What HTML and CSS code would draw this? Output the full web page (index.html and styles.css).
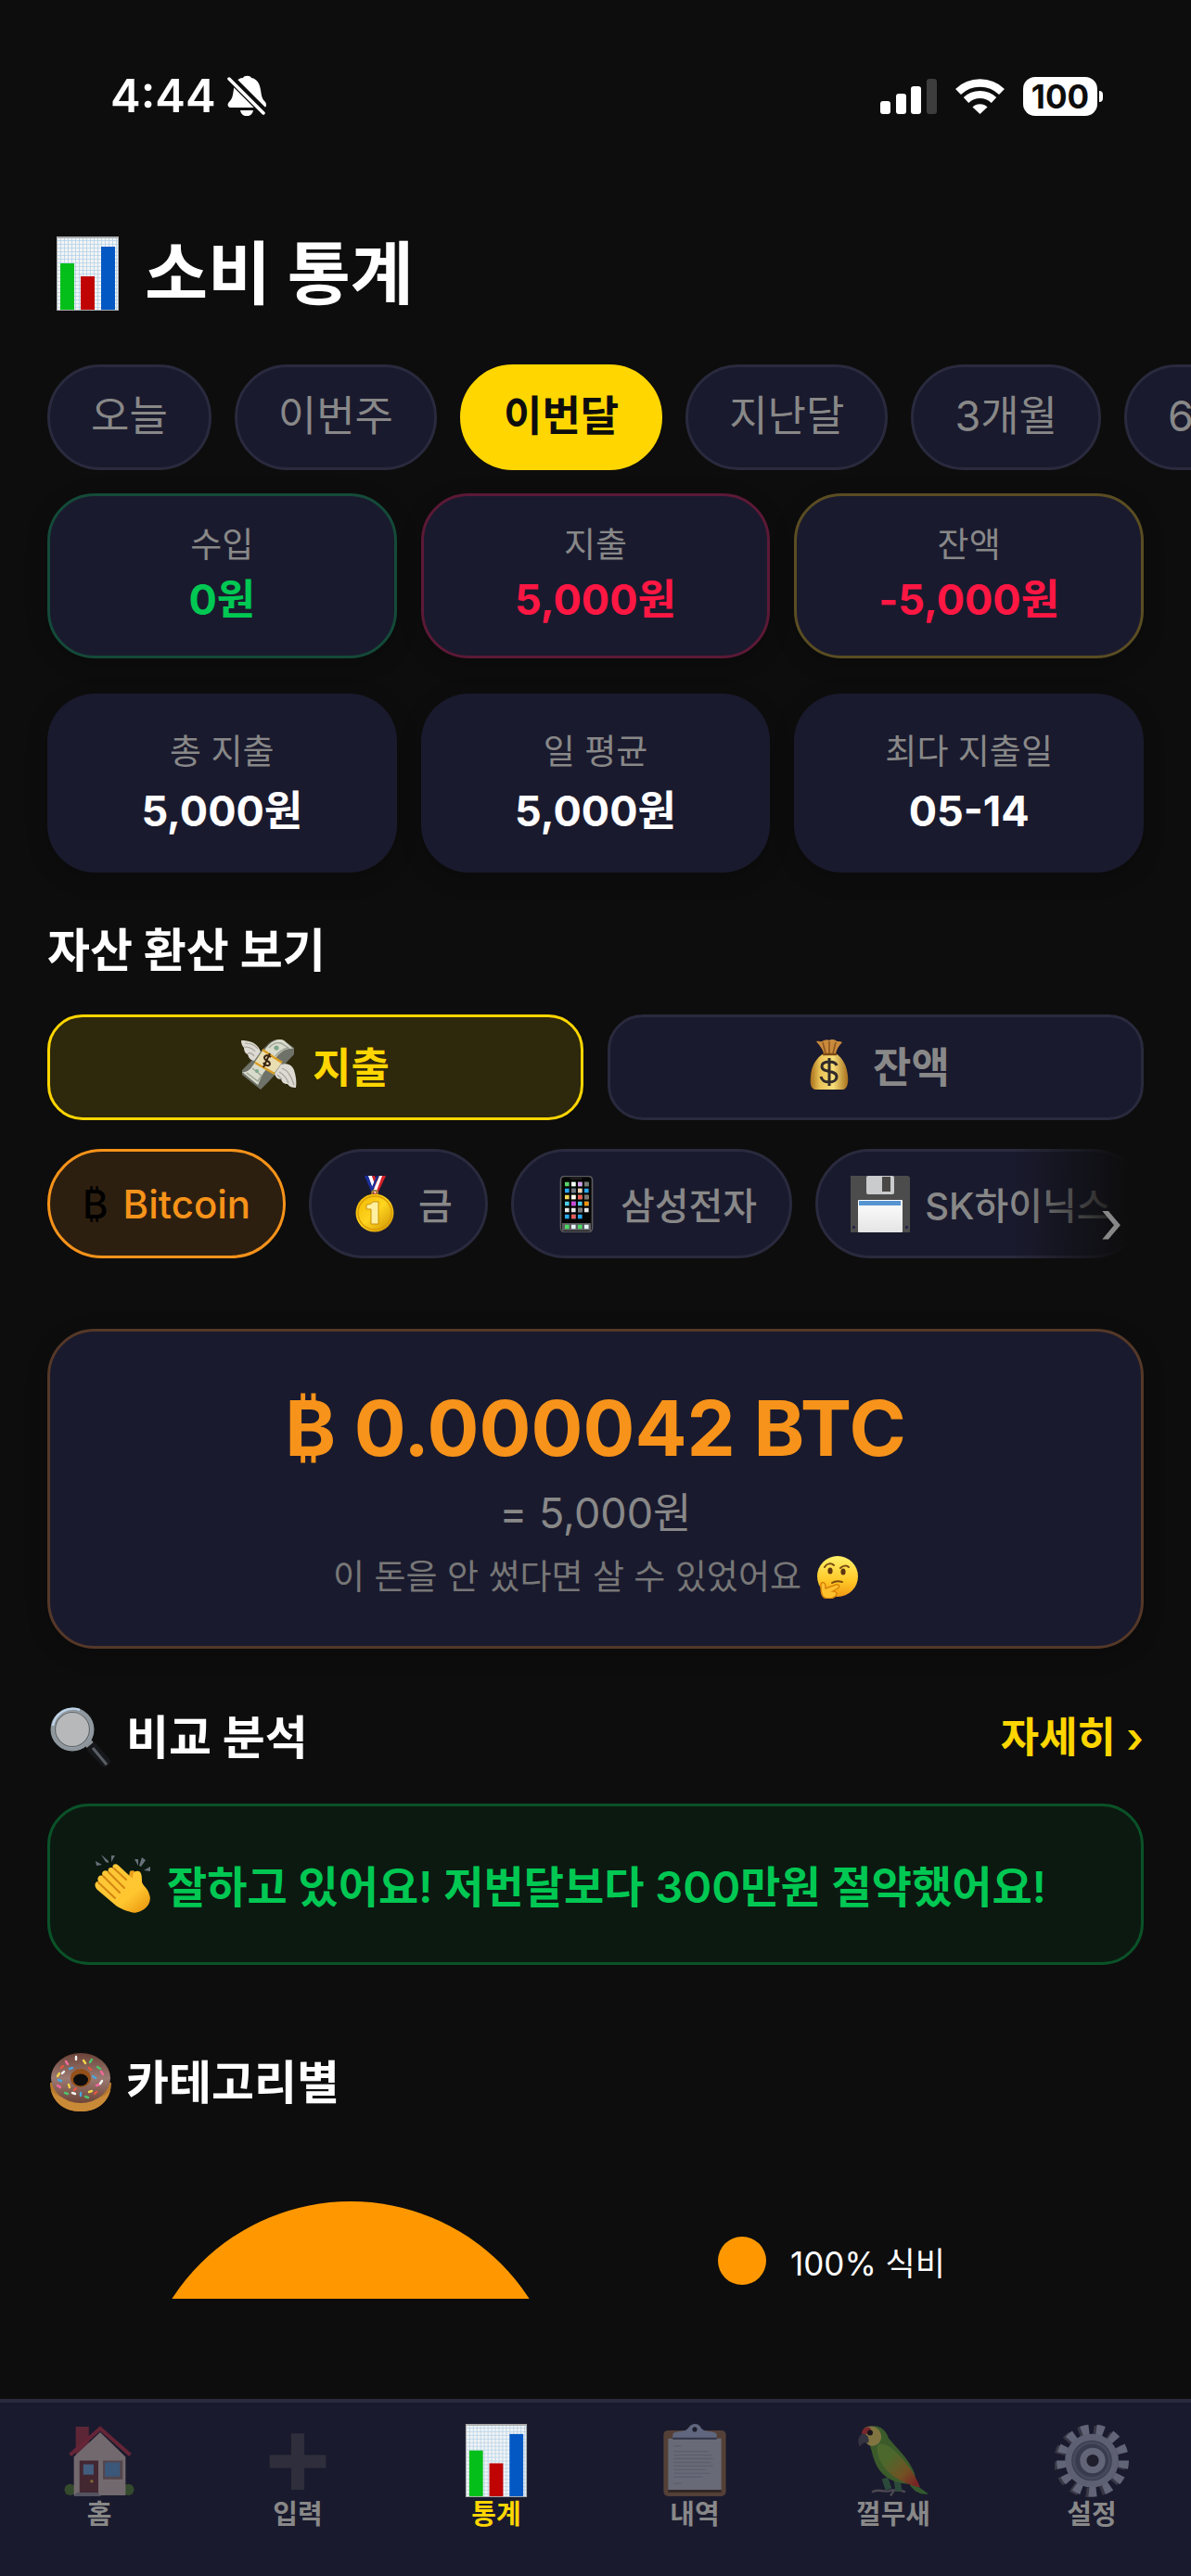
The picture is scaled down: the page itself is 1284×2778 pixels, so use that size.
FILE: index.html
```html
<!DOCTYPE html>
<html lang="ko">
<head>
    <meta charset="UTF-8">
    <meta name="viewport" content="width=device-width, initial-scale=1.0">
    <title>소비 통계</title>
    <link rel="stylesheet" href="styles.css">
</head>
<body>
    <!-- 아이콘 모음 -->
    <svg class="sprite" aria-hidden="true">
        <defs>
            <linearGradient id="gold" x1="0" y1="0" x2="1" y2="1">
                <stop offset="0" stop-color="#f0b400"/>
                <stop offset="0.5" stop-color="#ffd51f"/>
                <stop offset="1" stop-color="#c98a00"/>
            </linearGradient>
            <linearGradient id="bag" x1="0" y1="0" x2="1" y2="0">
                <stop offset="0" stop-color="#a86f1c"/>
                <stop offset="0.25" stop-color="#e9c255"/>
                <stop offset="0.6" stop-color="#f7df7a"/>
                <stop offset="1" stop-color="#a9701c"/>
            </linearGradient>
            <linearGradient id="face" x1="0" y1="0" x2="0" y2="1">
                <stop offset="0" stop-color="#fff06a"/>
                <stop offset="0.6" stop-color="#ffc928"/>
                <stop offset="1" stop-color="#f29a12"/>
            </linearGradient>
            <linearGradient id="hand" x1="0" y1="0" x2="1" y2="1">
                <stop offset="0" stop-color="#ffc83a"/>
                <stop offset="0.65" stop-color="#ffc62f"/>
                <stop offset="1" stop-color="#e8920c"/>
            </linearGradient>
            <linearGradient id="choco" x1="0" y1="0" x2="0" y2="1">
                <stop offset="0" stop-color="#6b4237"/>
                <stop offset="0.5" stop-color="#9b7a72"/>
                <stop offset="1" stop-color="#6e4438"/>
            </linearGradient>
            <linearGradient id="feather" x1="0" y1="0" x2="1" y2="1">
                <stop offset="0.3" stop-color="#7fb52c"/>
                <stop offset="0.65" stop-color="#c98a1c"/>
                <stop offset="0.9" stop-color="#d8301c"/>
            </linearGradient>
            <linearGradient id="label" x1="0" y1="0" x2="0" y2="1">
                <stop offset="0" stop-color="#ffffff"/>
                <stop offset="1" stop-color="#e4e4e4"/>
            </linearGradient>
            <pattern id="grid" width="4" height="4" patternUnits="userSpaceOnUse">
                <rect width="4" height="4" fill="#f2f4f5"/>
                <path d="M0 0h4M0 0v4" stroke="#b4d2e8" stroke-width="1.6"/>
            </pattern>
        </defs>

        <symbol id="i-chart" viewBox="0 0 67 80">
            <rect width="67" height="80" fill="#a9abad"/>
            <rect x="1" y="2" width="65" height="77" fill="url(#grid)"/>
            <rect x="4" y="29" width="15" height="50" fill="#04bf1a"/>
            <rect x="26" y="43" width="15" height="36" fill="#c00404"/>
            <rect x="48" y="11" width="15" height="68" fill="#0358c4"/>
        </symbol>

        <symbol id="i-money" viewBox="0 0 60 54">
            <path d="M28 6C33 0 41-1 46 1L57 9v7L29 46 21 54 1 38v-5Z" fill="#6f7268"/>
            <path d="M27 9C33 1 41-2 46 1L56 10C49 9 43 13 38 19L24 36c-3 5-4 9-6 13L1 35C7 36 11 31 14 26Z" fill="#d9dbcc"/>
            <path d="M30 9c4-5 9-6 13-5l8 5c-6 1-10 4-14 9M12 31l10 8-4 6-12-9" fill="none" stroke="#9ca294" stroke-width="1.4"/>
            <circle cx="38" cy="9" r="2.6" fill="#7ea889"/>
            <circle cx="17" cy="34" r="2" fill="#7ea889"/>
            <path d="M23 12 44 25 36 36 15 24Z" fill="#e9ddb2"/>
            <path d="M23 11 44 25M15 25l21 12" stroke="#dc9e20" stroke-width="2.4"/>
            <path d="M32 19c-3-3-7-2-7 1s6 3 6 6-5 3-7-1M31 15 24 30" fill="none" stroke="#3a2410" stroke-width="2"/>
            <path d="M0 1c8 0 15 2 19 8l2 4-7 10C9 22 8 19 7 16 4 15 3 12 3 9 1 7 0 4 0 1Z" fill="#dcdad2"/>
            <path d="M3 8c5 0 9 1 12 5M7 15c3-1 5 0 7 3M4 4c5 0 10 1 14 6" fill="none" stroke="#a4a198" stroke-width="1.2"/>
            <path d="M43 27c7-2 12 1 14 6 2 6 3 13 2 19-4 0-7-1-9-4-4 0-6-2-7-5-4 0-6-3-7-6Z" fill="#dcdad2"/>
            <path d="M44 31c6 2 10 8 13 18M41 35c5 3 8 6 10 12M39 38l5 5" fill="none" stroke="#a4a198" stroke-width="1.2"/>
        </symbol>

        <symbol id="i-bag" viewBox="0 0 60 54">
            <path d="M16 2c3-1 4 1 6 0s5-3 8-1c3-2 5-1 7 0 2 2 4 0 7 2-3 3-6 7-7 12H24c-1-5-5-9-8-13Z" fill="#c98a3c"/>
            <path d="M23 3l3 12M30 2v13M37 3l-3 12" stroke="#8d5720" stroke-width="1.6"/>
            <path d="M24 15h13c8 5 12 14 13 24 1 9-1 14-5 15H15c-5-1-6-6-5-15 1-11 6-19 14-24Z" fill="url(#bag)"/>
            <path d="M23 16h15" stroke="#7c4a14" stroke-width="2.4"/>
            <path d="M38 28c-1-3-4-4-8-4-5 0-8 2-8 5 0 8 16 3 16 11 0 4-4 6-8 6-5 0-8-2-9-6M30 20v30" fill="none" stroke="#2f2a2a" stroke-width="3"/>
        </symbol>

        <symbol id="i-medal" viewBox="0 0 64 61">
            <path d="M22 0h7l7 17-5 4Z" fill="#1c2f9c"/>
            <path d="M26 0h4l6 15-3 4Z" fill="#fff"/>
            <path d="M30 0h3l4 12-2 3Z" fill="#d8232a"/>
            <path d="M45 0h-7l-8 18 5 3Z" fill="#d8232a"/>
            <path d="M41 0h-3l-7 17 3 2Z" fill="#fff"/>
            <path d="M37 0h-2l-5 12 1 5Z" fill="#1c2f9c"/>
            <circle cx="33" cy="19" r="3" fill="none" stroke="#9c7a30" stroke-width="2"/>
            <circle cx="33" cy="40" r="20.5" fill="url(#gold)"/>
            <circle cx="33" cy="40" r="18" fill="none" stroke="#d99c05" stroke-width="1.4"/>
            <path d="M31 28h6v24h-8V36h-5v-5c4 0 6-1 7-3Z" fill="#fff0a0" stroke="#c99108" stroke-width="1"/>
        </symbol>

        <symbol id="i-phone" viewBox="0 0 64 61">
            <rect x="15.500" y="0.500" width="34" height="60" rx="4" fill="#050505" stroke="#5c5c60" stroke-width="1.6"/>
            <path d="M26 2h12v2H26Z" fill="#1c1c1e"/>
            <g stroke-width="4.600" fill="none" stroke-dasharray="4.6 2.4">
                <path d="M20 9h26" stroke="#58d36a"/>
                <path d="M20 16h26" stroke="#2aa8ef"/>
                <path d="M20 23h26" stroke="#f4d95b"/>
                <path d="M20 30h26" stroke="#4ccbe8"/>
                <path d="M20 37h26" stroke="#e8e8e8"/>
                <path d="M20 44h19" stroke="#2aa8ef"/>
            </g>
            <g stroke-width="4.600" fill="none">
                <path d="M27 9h4.600M27 23h4.600" stroke="#fff"/>
                <path d="M34 9h4.600" stroke="#d79cf0"/>
                <path d="M41 9h4.600M27 16h4.600M41 23h4.600M34 37h4.600" stroke="#77777c"/>
                <path d="M34 16h4.600" stroke="#f3cfa8"/>
                <path d="M34 23h4.600M27 44h4.600" stroke="#ef5a54"/>
                <path d="M27 30h4.600" stroke="#cf45d8"/>
                <path d="M41 30h4.600" stroke="#ff9409"/>
            </g>
            <rect x="17" y="51" width="31" height="8" fill="#5b5b60"/>
            <path d="M20 55h26" stroke="#4cd964" stroke-width="4.600" stroke-dasharray="4.6 9.4"/>
            <path d="M27 55h19" stroke="#e6f4fb" stroke-width="4.600" stroke-dasharray="4.6 9.4"/>
        </symbol>

        <symbol id="i-floppy" viewBox="0 0 64 61">
            <path d="M0 0h62l2 2v59H0Z" fill="#4c4c4c"/>
            <rect x="17" y="0" width="30" height="20" rx="2" fill="#c9cbcc"/>
            <rect x="34" y="1" width="9" height="16" fill="#4a4846"/>
            <rect x="8" y="26" width="48" height="35" rx="1" fill="url(#label)"/>
            <rect x="9" y="27" width="45" height="5" fill="#5694d2"/>
            <path d="M2 54h3v3H2ZM59 54h3v3h-3Z" fill="#26264a"/>
        </symbol>

        <symbol id="i-think" viewBox="0 0 45 46">
            <circle cx="23" cy="22" r="22" fill="url(#face)"/>
            <path d="M9 12c2-4 7-5 10-2M26 13c3-3 7-3 9-1" fill="none" stroke="#7a4a12" stroke-width="2" stroke-linecap="round"/>
            <ellipse cx="15" cy="16" rx="2.6" ry="3.500" fill="#5d3510"/>
            <ellipse cx="29" cy="17" rx="2.6" ry="3.500" fill="#5d3510"/>
            <path d="M17 29c3-2 7-2 11-1" fill="none" stroke="#7a4a12" stroke-width="2" stroke-linecap="round"/>
            <path d="M5 30c2-3 5-1 5 3v2l11-4c4-1 5 2 2 4l-5 3c4 0 5 3 3 5-3 3-8 4-12 2-4-2-4-8-4-15Z" fill="#ffc02e" stroke="#d78207" stroke-width="1.4"/>
        </symbol>

        <symbol id="i-search" viewBox="0 0 66 66">
            <path d="M42 42l6-4 16 18c3 4-3 11-7 8L40 47Z" fill="#17181b"/>
            <path d="M46 44l15 18" stroke="#5a5f66" stroke-width="3"/>
            <path d="M38 42l7-6" stroke="#8a8f94" stroke-width="5"/>
            <circle cx="24" cy="24" r="21.500" fill="#b6b8b9" stroke="#8e979e" stroke-width="4"/>
            <circle cx="24" cy="24" r="18.500" fill="none" stroke="#5c6368" stroke-width="1.2"/>
            <path d="M3 20A22 22 0 0 1 32 3" fill="none" stroke="#bcd4ea" stroke-width="2.4"/>
        </symbol>

        <symbol id="i-clap" viewBox="0 0 60 64">
            <path d="M7 1l8 7v2l-3-1ZM18 2l4 0-4 7ZM1 8l7 4-6 1ZM43 6l4 7 0-7ZM51 4l4 3-5 7-2-1ZM53 18l7-4v5Z" fill="#68707a"/>
            <path d="M38 19c4-2 7 1 9 6l9 14c5 7 4 13 0 18-5 6-13 8-17 6l-8-5Z" fill="#e9a01b"/>
            <path d="M21 17c-3-4-8-1-6 3-4-4-9 0-6 4-4-2-7 2-5 6-4 0-5 5-1 9l20 17c12 8 22 9 30 4 6-4 8-10 6-16-2-8-8-9-8-14 0-8-1-12-6-11-3 0-4 4-4 8L26 13c-4-4-9 0-5 4Z" fill="url(#hand)"/>
            <path d="M15 20l17 17M9 24l18 18M4 31l18 17M21 16l13 12" fill="none" stroke="#d48612" stroke-width="2" stroke-linecap="round"/>
        </symbol>

        <symbol id="i-donut" viewBox="0 0 66 64">
            <path d="M0 32c0 18 13 31 33 31s33-13 33-31Z" fill="#b8792c"/>
            <path d="M33 63c-15 0-28-7-32-23 9 14 55 15 64 0-4 16-17 23-32 23Z" fill="#c98a38"/>
            <ellipse cx="33" cy="27" rx="32" ry="27" fill="url(#choco)"/>
            <ellipse cx="33" cy="27" rx="11" ry="10" fill="#935019"/>
            <ellipse cx="33" cy="29" rx="8" ry="6.500" fill="#0d0d0d"/>
            <g fill="none" stroke-width="2.400" stroke-linecap="round">
                <path d="M17 9l2 3M55 20l2 3M8 35l3 2M50 35l3-1" stroke="#f06a9b"/>
                <path d="M28 4v3M56 30l-2 3M24 43l3 1M13 22l2-2" stroke="#f2f2f2"/>
                <path d="M36 8l2 3M20 34l1 3M42 42l3-1M8 25l2-3" stroke="#f0d34a"/>
                <path d="M45 7l-2 3M51 15l3 2M16 43l3 1M38 47l3 1" stroke="#4fc26b"/>
                <path d="M24 16l-3 1M46 25l3 2M33 43v3M12 30l-3-1" stroke="#4aa5dc"/>
                <path d="M14 14l-2 2M48 44l2-2M28 38l-2 2M42 16l2 2" stroke="#e8553e"/>
            </g>
        </symbol>

        <symbol id="i-house" viewBox="0 0 78 78">
            <path d="M14 3h14v18L14 34Z" fill="#a0323e"/>
            <circle cx="8" cy="70" r="6" fill="#4d7a2c"/>
            <circle cx="70" cy="70" r="6" fill="#4d7a2c"/>
            <path d="M12 35 40 9l27 26v41H12Z" fill="#c9b8ae"/>
            <path d="M8 33 40 5l32 28" fill="none" stroke="#b03040" stroke-width="4"/>
            <rect x="18" y="39" width="20" height="36" fill="#6b3434"/>
            <rect x="22" y="43" width="11" height="11" fill="#6aa0cc"/>
            <circle cx="31" cy="61" r="1.600" fill="#f0c040"/>
            <rect x="43" y="39" width="21" height="20" fill="#8c706c"/>
            <rect x="45" y="41" width="16" height="15" fill="#5d94c4"/>
            <path d="M15 73h22l4 4H12Z" fill="#8d8d94"/>
        </symbol>

        <symbol id="i-plus" viewBox="0 0 78 78">
            <path d="M32 10h14v23h23v14H46v23H32V47H9V33h23Z" fill="#42424a"/>
        </symbol>

        <symbol id="i-clip" viewBox="0 0 78 80">
            <rect x="5" y="7" width="68" height="72" rx="5" fill="#8f6740"/>
            <rect x="10" y="16" width="58" height="56" fill="#b6b9c2"/>
            <path d="M10 72h58v3H10Z" fill="#4b3220"/>
            <path d="M16 24h8M16 30h38M16 34h42M16 38h43M16 42h40M16 46h43M16 50h36M16 54h40M16 58h32M16 65h9" stroke="#9fa2ab" stroke-width="1.400"/>
            <path d="M15 16v-4c0-3 3-3 8-4 6 0 8-2 10-5 3-4 10-4 12 0 2 3 4 5 10 5 5 1 8 1 8 4v4Z" fill="#a4b2cb"/>
            <circle cx="39" cy="6" r="2.600" fill="#20202c"/>
            <path d="M15 16h48" stroke="#4a5060" stroke-width="2"/>
        </symbol>

        <symbol id="i-parrot" viewBox="0 0 80 78">
            <path d="M17 73c8-5 14 2 21-2 6 0 10-1 15 2M37 77l4-6" fill="none" stroke="#7a7474" stroke-width="2.400"/>
            <path d="M31 58l4 12M44 60l2 12" stroke="#3f7a48" stroke-width="7"/>
            <path d="M54 58l24 17c-8 1-14-2-19-8Z" fill="#4d9a30"/>
            <path d="M14 3c9-4 18 2 21 12 8 10 22 22 28 38 2 8-2 12-9 11-12-1-24-6-31-18-5-9-6-18-9-26Z" fill="#5d9c2a"/>
            <path d="M23 30c-2-12 7-10 14-5 12 9 26 27 32 43-18-4-42-15-46-38Z" fill="url(#feather)"/>
            <path d="M9 4c8-5 17 0 18 8 1 7-5 12-12 11C8 20 5 10 9 4Z" fill="#e5cf55"/>
            <path d="M8 5c5-4 9-1 8 3l-8 4c-3-1-2-5 0-7Z" fill="#d8342b"/>
            <path d="M7 10c5 0 8 5 6 10-4-1-7 0-9 4C1 20 2 12 7 10Z" fill="#4c4c54"/>
            <circle cx="15" cy="9" r="3" fill="#1c120c"/>
        </symbol>

        <symbol id="i-gear" viewBox="0 0 78 78">
            <circle cx="37" cy="40" r="33" pathLength="26" fill="none" stroke="#57565f" stroke-width="11" stroke-dasharray="1 1"/>
            <circle cx="40" cy="39" r="33" pathLength="26" fill="none" stroke="#a9afc0" stroke-width="11" stroke-dasharray="1 1"/>
            <circle cx="39" cy="39" r="25" fill="#565c6c" stroke="#a0a6b6" stroke-width="7"/>
            <circle cx="39" cy="39" r="19" fill="none" stroke="#737989" stroke-width="3"/>
            <circle cx="40" cy="39" r="10" fill="#24222c" stroke="#a9afc0" stroke-width="7"/>
        </symbol>
    </svg>

    <div class="status-bar">
        <div class="status-left">
            <span>4:44</span>
            <svg class="icon-bell" viewBox="0 0 42 46">
                <path d="M3 35c-3-1-3-4-1-6 4-4 4-8 5-14C8 7 12 3 17 3c1-3 8-3 9 0 6 1 9 6 10 13 1 6 1 9 5 13 2 3 1 6-1 6Z" fill="#fff"/>
                <path d="M14 38h14c-1 4-3 6-7 6s-6-2-7-6Z" fill="#fff"/>
                <path d="M0 0 42 42" stroke="#0d0d0d" stroke-width="9"/>
                <path d="M2 4l37 37" stroke="#fff" stroke-width="3.500" stroke-linecap="round"/>
            </svg>
        </div>
        <div class="status-right">
            <svg class="icon-signal" viewBox="0 0 61 38">
                <rect x="0" y="24" width="11" height="14" rx="3" fill="#fff"/>
                <rect x="17" y="16" width="11" height="22" rx="3" fill="#fff"/>
                <rect x="33" y="8" width="11" height="30" rx="3" fill="#fff"/>
                <rect x="50" y="0" width="11" height="38" rx="3" fill="#3d3d3d"/>
            </svg>
            <svg class="icon-wifi" viewBox="0 0 53 38">
                <path d="M3 14a34 34 0 0 1 47 0" fill="none" stroke="#fff" stroke-width="8.500"/>
                <path d="M11.500 23a22 22 0 0 1 30 0" fill="none" stroke="#fff" stroke-width="8"/>
                <path d="M18.500 30.500a11.500 11.500 0 0 1 16 0L26.500 38Z" fill="#fff"/>
            </svg>
            <div class="battery"><span>100</span></div>
        </div>
    </div>

    <main class="content">
        <h1 class="page-title"><svg class="icon-title"><use href="#i-chart"/></svg>소비 통계</h1>

        <div class="tabs">
            <button class="tab">오늘</button>
            <button class="tab">이번주</button>
            <button class="tab active">이번달</button>
            <button class="tab">지난달</button>
            <button class="tab">3개월</button>
            <button class="tab">6개월</button>
        </div>

        <div class="cards balance">
            <div class="card income">
                <div class="card-label">수입</div>
                <div class="card-value">0원</div>
            </div>
            <div class="card expense">
                <div class="card-label">지출</div>
                <div class="card-value">5,000원</div>
            </div>
            <div class="card remain">
                <div class="card-label">잔액</div>
                <div class="card-value">-5,000원</div>
            </div>
        </div>

        <div class="cards summary">
            <div class="card">
                <div class="card-label">총 지출</div>
                <div class="card-value">5,000원</div>
            </div>
            <div class="card">
                <div class="card-label">일 평균</div>
                <div class="card-value">5,000원</div>
            </div>
            <div class="card">
                <div class="card-label">최다 지출일</div>
                <div class="card-value">05-14</div>
            </div>
        </div>

        <h2 class="section-title">자산 환산 보기</h2>
        <div class="modes">
            <button class="mode active"><svg class="icon-mode"><use href="#i-money"/></svg>지출</button>
            <button class="mode"><svg class="icon-mode"><use href="#i-bag"/></svg>잔액</button>
        </div>

        <div class="assets">
            <div class="asset-list">
                <button class="asset active"><span class="coin">₿</span>Bitcoin</button>
                <button class="asset"><svg class="icon-asset"><use href="#i-medal"/></svg>금</button>
                <button class="asset"><svg class="icon-asset"><use href="#i-phone"/></svg>삼성전자</button>
                <button class="asset"><svg class="icon-asset"><use href="#i-floppy"/></svg>SK하이닉스</button>
            </div>
            <button class="asset-more">›</button>
        </div>

        <div class="result">
            <div class="result-amount">₿ 0.000042 BTC</div>
            <div class="result-won">= 5,000원</div>
            <div class="result-note">이 돈을 안 썼다면 살 수 있었어요 <svg class="icon-note"><use href="#i-think"/></svg></div>
        </div>

        <div class="section-head">
            <h2 class="section-title"><svg class="icon-section"><use href="#i-search"/></svg>비교 분석</h2>
            <a class="detail-link" href="#">자세히 ›</a>
        </div>
        <div class="praise"><svg class="icon-praise"><use href="#i-clap"/></svg>잘하고 있어요! 저번달보다 300만원 절약했어요!</div>

        <h2 class="section-title category-title"><svg class="icon-section"><use href="#i-donut"/></svg>카테고리별</h2>
        <div class="chart">
            <div class="pie-area"><div class="pie"></div></div>
            <div class="legend"><span class="dot"></span>100% 식비</div>
        </div>
    </main>

    <nav class="bottom-nav">
        <a class="nav-item" href="#"><svg class="nav-icon"><use href="#i-house"/></svg>홈</a>
        <a class="nav-item" href="#"><svg class="nav-icon"><use href="#i-plus"/></svg>입력</a>
        <a class="nav-item active" href="#"><svg class="nav-icon"><use href="#i-chart"/></svg>통계</a>
        <a class="nav-item" href="#"><svg class="nav-icon"><use href="#i-clip"/></svg>내역</a>
        <a class="nav-item" href="#"><svg class="nav-icon"><use href="#i-parrot"/></svg>껄무새</a>
        <a class="nav-item" href="#"><svg class="nav-icon"><use href="#i-gear"/></svg>설정</a>
    </nav>
</body>
</html>
```

FILE: styles.css
```css
* {
    box-sizing: border-box;
}

body, h1, h2 {
    margin: 0;
    padding: 0;
}

body {
    display: flex;
    flex-direction: column;
    min-height: 100vh;
    overflow-x: hidden;
    background-color: #0d0d0d;
    color: #fff;
    font-family: Inter, "Noto Sans CJK KR", sans-serif;
}

button {
    margin: 0;
    font-family: inherit;
    cursor: pointer;
}

a {
    text-decoration: none;
}

svg {
    flex: none;
}

.sprite {
    position: absolute;
    width: 0;
    height: 0;
}

/* Status bar */
.status-bar {
    display: flex;
    justify-content: space-between;
    align-items: center;
    padding: 74px 101px 0 119px;
}

.status-left,
.status-right {
    display: flex;
    align-items: center;
}

.status-left {
    gap: 12px;
    font-size: 49px;
    font-weight: 600;
    line-height: 60px;
}

.status-right {
    gap: 20px;
}

.icon-bell {
    width: 42px;
    height: 46px;
}

.icon-signal {
    width: 61px;
    height: 38px;
}

.icon-wifi {
    width: 53px;
    height: 38px;
}

.battery {
    position: relative;
    width: 80px;
    height: 42px;
    border-radius: 13px;
    background-color: #fff;
    color: #0d0d0d;
    font-size: 35px;
    font-weight: 700;
    line-height: 42px;
    text-align: center;
}

.battery::after {
    content: "";
    position: absolute;
    top: 15px;
    right: -6px;
    width: 4px;
    height: 12px;
    border-radius: 0 4px 4px 0;
    background-color: #fff;
}

/* Content */
.content {
    flex: 1;
    padding: 121px 51px 107px;
}

.page-title {
    display: flex;
    align-items: center;
    gap: 28px;
    padding-left: 10px;
    font-size: 74px;
    font-weight: 700;
    line-height: 80px;
}

.icon-title {
    width: 67px;
    height: 80px;
}

/* Period tabs */
.tabs {
    display: flex;
    gap: 25px;
    margin: 58px -51px 0 0;
    overflow: hidden;
}

.tab {
    flex: none;
    height: 114px;
    padding: 0 44px 10px;
    border: 3px solid #2a2a3e;
    border-radius: 57px;
    background-color: #1a1a2e;
    color: #888;
    font-size: 45px;
}

.tab.active {
    border-color: #ffd600;
    background-color: #ffd600;
    color: #0d0d0d;
    font-weight: 700;
}

/* Number cards */
.cards {
    display: grid;
    grid-template-columns: repeat(3, 1fr);
    gap: 26px;
    text-align: center;
}

.card {
    border-radius: 51px;
    background-color: #1a1a2e;
    box-shadow: 0 6px 24px rgba(0, 0, 0, 0.2);
}

.card-label {
    color: #888;
    font-size: 37px;
    line-height: 50px;
}

.card-value {
    font-size: 45px;
    font-weight: 700;
    line-height: 60px;
}

.balance {
    margin-top: 25px;
}

.balance .card {
    padding: 28px 0 30px;
    border: 3px solid;
}

.balance .card-value {
    margin-top: 4px;
}

.balance .income {
    border-color: #144a39;
}

.income .card-value {
    color: #00c853;
}

.balance .expense {
    border-color: #5c1936;
}

.balance .remain {
    border-color: #5a4d22;
}

.expense .card-value,
.remain .card-value {
    color: #ff1744;
}

.summary {
    margin-top: 38px;
}

.summary .card {
    padding: 38px 0 36px;
}

.summary .card-value {
    margin-top: 9px;
}

/* Section titles */
.section-title {
    display: flex;
    align-items: center;
    gap: 16px;
    margin-top: 49px;
    font-size: 50px;
    font-weight: 700;
    line-height: 70px;
}

.icon-section {
    width: 66px;
    height: 66px;
    margin-left: 3px;
}

.section-head {
    display: flex;
    justify-content: space-between;
    align-items: center;
    margin-top: 61px;
}

.section-head .section-title {
    margin-top: 0;
}

.detail-link {
    color: #ffd600;
    font-size: 45px;
    font-weight: 600;
    line-height: 60px;
}

.category-title {
    margin-top: 92px;
}

/* Expense / balance switch */
.modes {
    display: grid;
    grid-template-columns: repeat(2, 1fr);
    gap: 26px;
    margin-top: 34px;
}

.mode {
    display: flex;
    justify-content: center;
    align-items: center;
    gap: 17px;
    height: 114px;
    padding-bottom: 7px;
    border: 3px solid #2a2a3e;
    border-radius: 38px;
    background-color: #1a1a2e;
    color: #888;
    font-size: 45px;
    font-weight: 600;
}

.mode.active {
    border-color: #ffd600;
    background-color: #2e280c;
    color: #ffd600;
}

.icon-mode {
    width: 60px;
    height: 54px;
}

/* Asset chips */
.assets {
    position: relative;
    margin-top: 31px;
}

.asset-list {
    display: flex;
    gap: 25px;
    padding-bottom: 38px;
    overflow: hidden;
}

.asset {
    display: flex;
    flex: none;
    align-items: center;
    gap: 16px;
    height: 118px;
    padding: 0 35px;
    border: 3px solid #2a2a3e;
    border-radius: 59px;
    background-color: #1a1a2e;
    color: #888;
    font-size: 40px;
    font-weight: 500;
}

.asset.active {
    border-color: #f7931a;
    background-color: #2d1f10;
    color: #f7931a;
    font-size: 42px;
}

.coin {
    color: #000;
}

.icon-asset {
    width: 64px;
    height: 61px;
}

.asset-more {
    position: absolute;
    top: 0;
    right: 0;
    width: 140px;
    height: 100%;
    padding: 0 22px 0 0;
    border: none;
    background: linear-gradient(to right, rgba(13, 13, 13, 0), #0d0d0d 90%);
    color: #888;
    font-size: 66px;
    text-align: right;
}

/* Converted amount */
.result {
    padding: 54px 51px 49px;
    border: 3px solid #553828;
    border-radius: 51px;
    margin-top: 38px;
    background-color: #1a1a2e;
    box-shadow: 0 6px 24px rgba(0, 0, 0, 0.2);
    text-align: center;
}

.result-amount {
    color: #f7931a;
    font-size: 83px;
    font-weight: 700;
    line-height: 100px;
}

.result-won {
    margin-top: 12px;
    color: #888;
    font-size: 45px;
    line-height: 60px;
}

.result-note {
    display: flex;
    justify-content: center;
    align-items: center;
    gap: 16px;
    margin-top: 14px;
    color: #777;
    font-size: 37px;
    line-height: 50px;
}

.icon-note {
    width: 45px;
    height: 46px;
}

/* Compare message */
.praise {
    display: flex;
    align-items: center;
    gap: 18px;
    min-height: 174px;
    margin-top: 36px;
    padding: 0 48px 2px;
    border: 3px solid #0a5228;
    border-radius: 45px;
    background-color: #0c1911;
    color: #00c853;
    font-size: 47px;
    font-weight: 600;
}

.icon-praise {
    width: 60px;
    height: 64px;
}

/* Category chart */
.chart {
    display: flex;
    height: 105px;
    margin-top: 93px;
    overflow: hidden;
}

.pie-area {
    display: flex;
    flex: none;
    justify-content: center;
    width: 654px;
}

.pie {
    flex: none;
    width: 458px;
    height: 458px;
    border-radius: 50%;
    background-color: #ff9800;
}

.legend {
    display: flex;
    align-items: center;
    gap: 26px;
    height: 52px;
    margin: 38px 0 0 69px;
    font-size: 35px;
}

.dot {
    width: 52px;
    height: 52px;
    border-radius: 50%;
    background-color: #ff9800;
}

/* Bottom navigation */
.bottom-nav {
    display: grid;
    grid-template-columns: repeat(6, 1fr);
    padding: 23px 0 47px;
    border-top: 4px solid #2a2a3e;
    background-color: #1a1a2e;
}

.nav-item {
    display: flex;
    flex-direction: column;
    align-items: center;
    color: #888;
    font-size: 29px;
    font-weight: 600;
    line-height: 38px;
}

.nav-icon {
    width: 80px;
    height: 79px;
    opacity: 0.5;
}

.nav-item.active {
    color: #ffd600;
}

.nav-item.active .nav-icon {
    opacity: 1;
}
```
